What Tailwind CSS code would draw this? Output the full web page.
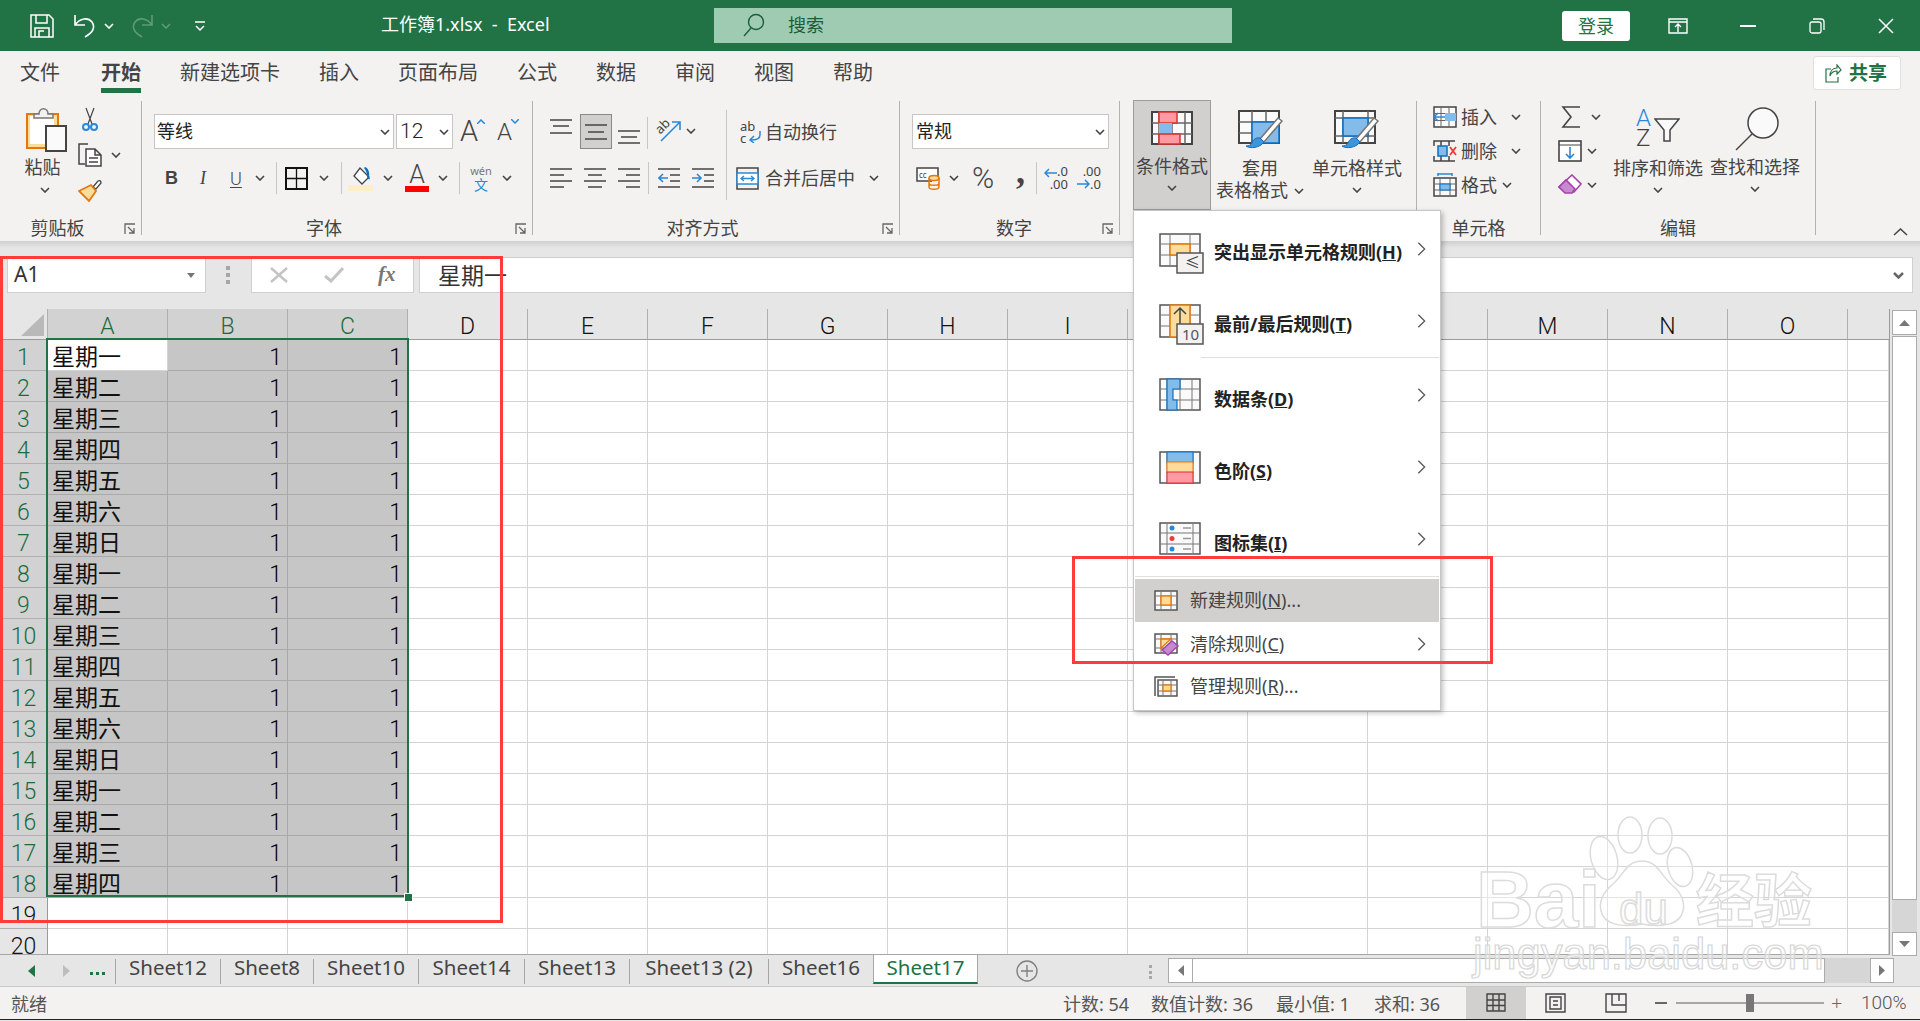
<!DOCTYPE html>
<html lang="zh">
<head>
<meta charset="UTF-8">
<title>工作簿1.xlsx - Excel</title>
<script src="https://cdn.jsdelivr.net/npm/@tailwindcss/browser@4"></script>
</head>
<body class="w-[1920px] h-[1021px] overflow-hidden relative bg-[#e6e6e6] text-[#444] text-[18px] [font-family:'Noto_Sans','Noto_Sans_CJK_SC',sans-serif]">

<svg class="hidden">
  <symbol id="chev" viewBox="0 0 10 6"><path d="M1 1l4 4 4-4" fill="none" stroke="#444" stroke-width="1.6"/></symbol>
  <symbol id="launch" viewBox="0 0 12 12"><path d="M1 11V1h10M4 4l6 6M5 10h5V5" fill="none" stroke="#666" stroke-width="1.3"/></symbol>
  <symbol id="next" viewBox="0 0 10 16"><path d="M1.5 1l7 7-7 7" fill="none" stroke="#555" stroke-width="1.4"/></symbol>
  <symbol id="brush" viewBox="0 0 46 42"><path d="M44 11L26 32l-4-3L40 8z" fill="#fff" stroke="#777" stroke-width="1.5"/><path d="M22 28c-4-1-7 2-8 5-1 2-3 3-6 3 4 3 14 2 18-4z" fill="#3a96dd" stroke="#1b6fb5"/></symbol>
</svg>

<!-- title bar -->
<div class="h-[51px] bg-[#217346] flex items-center text-white">
  <svg class="ml-[30px] w-[24px] h-[24px]" viewBox="0 0 24 24" fill="none" stroke="#fff" stroke-width="1.5"><path d="M1 1h18l4 4v18H1zM6 1v8h11V1M5 23v-9h14v9M9 23v-6h5"/></svg>
  <svg class="ml-[19px] w-[23px] h-[24px]" viewBox="0 0 23 24" fill="none" stroke="#fff" stroke-width="1.6"><path d="M2 1v10h10M2 11C7 4 15 3 19 8c4 6 0 11-7 15"/></svg>
  <svg class="ml-[8px] w-[10px] h-[6px]" viewBox="0 0 10 6"><path d="M1 1l4 4 4-4" fill="none" stroke="#fff" stroke-width="1.6"/></svg>
  <svg class="ml-[17px] w-[23px] h-[24px]" viewBox="0 0 23 24" fill="none" stroke="#5f9b79" stroke-width="1.6"><path d="M21 1v10H11M21 11C16 4 8 3 4 8c-4 6 0 11 7 15"/></svg>
  <svg class="ml-[7px] w-[10px] h-[6px]" viewBox="0 0 10 6"><path d="M1 1l4 4 4-4" fill="none" stroke="#5f9b79" stroke-width="1.6"/></svg>
  <svg class="ml-[24px] w-[10px] h-[12px]" viewBox="0 0 10 12" fill="none" stroke="#fff" stroke-width="1.5"><path d="M0 2h10M1 6l4 4 4-4"/></svg>
  <div class="ml-[176px] w-[170px] whitespace-nowrap text-[18px] leading-[24px] -mt-[3px]">工作簿1.xlsx&nbsp; -&nbsp; Excel</div>
  <div class="ml-[163px] w-[518px] h-[35px] -mt-[1px] bg-[#9fcbb3] flex items-center pl-[29px] text-[#1c5c38]">
    <svg class="w-[22px] h-[24px]" viewBox="0 0 22 24" fill="none" stroke="#1c5c38" stroke-width="1.4"><circle cx="13" cy="9" r="7.5"/><path d="M8 15L1 23"/></svg>
    <span class="ml-[23px]">搜索</span>
  </div>
  <div class="ml-[330px] w-[68px] h-[30px] bg-white rounded-[3px] text-[#217346] text-center leading-[30px]">登录</div>
  <svg class="ml-[38px] w-[20px] h-[16px]" viewBox="0 0 20 16" fill="none" stroke="#fff" stroke-width="1.4"><path d="M1 1h18v14H1zM1 4h18M10 14V7M7 9l3-3 3 3"/></svg>
  <div class="ml-[52px] w-[16px] h-[2px] bg-white"></div>
  <svg class="ml-[53px] w-[16px] h-[16px]" viewBox="0 0 16 16" fill="none" stroke="#fff" stroke-width="1.3"><rect x="1" y="4" width="11" height="11" rx="2"/><path d="M4 1h8a3 3 0 0 1 3 3v8"/></svg>
  <svg class="ml-[53px] w-[16px] h-[16px]" viewBox="0 0 16 16" stroke="#fff" stroke-width="1.5"><path d="M1 1l14 14M15 1L1 15"/></svg>
</div>

<!-- ribbon -->
<div class="h-[190px] bg-[#f3f2f1] relative">
  <div class="h-[50px] flex pl-[20px] gap-[39px] text-[20px] leading-[28px] text-[#444] relative">
    <div class="pt-[8px] mr-[2px]">文件</div>
    <div class="pt-[8px] pb-[1px] h-[42px] font-bold border-b-[5px] border-[#217346]">开始</div>
    <div class="pt-[8px]">新建选项卡</div>
    <div class="pt-[8px]">插入</div>
    <div class="pt-[8px]">页面布局</div>
    <div class="pt-[8px]">公式</div>
    <div class="pt-[8px]">数据</div>
    <div class="pt-[8px]">审阅</div>
    <div class="pt-[8px]">视图</div>
    <div class="pt-[8px]">帮助</div>
    <div class="absolute left-[1813px] top-[5px] w-[88px] h-[34px] bg-white border border-[#e1dfdd] rounded-[3px] flex items-center pl-[11px] text-[#217346] font-bold text-[19px]">
      <svg class="w-[17px] h-[19px]" viewBox="0 0 17 19" fill="none" stroke="#217346" stroke-width="1.2"><path d="M6 5H1v13h12v-5M5 12c0-5 3-8 7-8V1l4 5-4 4V7c-3 0-6 2-7 5z"/></svg>
      <span class="ml-[7px]">共享</span>
    </div>
  </div>

  <div class="flex h-[134px]">
    <!-- 剪贴板 -->
    <div class="w-[142px] border-r border-[#b3b0ad] flex flex-col relative">
      <div class="h-[115px] shrink-0 flex">
        <div class="ml-[20px] w-[50px] flex flex-col items-center">
          <svg class="mt-[6px] ml-[4px] w-[42px] h-[45px]" viewBox="0 0 42 45"><rect x="1" y="7" width="31" height="34" fill="#fbdc9b" stroke="#e3780c" stroke-width="2"/><rect x="4" y="9" width="24" height="28" fill="#fff"/><path d="M8 11V7h5c0-7 9-7 9 0h5v4z" fill="#f3f2f1" stroke="#777" stroke-width="1.5"/><rect x="20" y="19" width="20" height="25" fill="#fafafa" stroke="#444" stroke-width="2"/></svg>
          <div class="mt-[3px] mr-[5px] leading-[24px]">粘贴</div>
          <svg class="mt-[8px] w-[10px] h-[6px]"><use href="#chev"/></svg>
        </div>
        <div class="ml-[8px] flex flex-col">
          <svg class="mt-[6px] ml-[4px] w-[16px] h-[24px]" viewBox="0 0 16 24" fill="none"><path d="M4 1l6 16M12 1L6 17" stroke="#444" stroke-width="1.2"/><circle cx="4" cy="20" r="3" stroke="#2b88d8" stroke-width="2"/><circle cx="12" cy="20" r="3" stroke="#2b88d8" stroke-width="2"/></svg>
          <div class="mt-[12px] flex items-center">
            <svg class="w-[24px] h-[24px]" viewBox="0 0 24 24" fill="none" stroke="#444" stroke-width="1.5"><path d="M10 1H1v20h6"/><path d="M8 6h9l6 6v11H8zM17 6v6h6M11 15h9M11 19h9" fill="#fff"/></svg>
            <svg class="ml-[9px] w-[10px] h-[6px]"><use href="#chev"/></svg>
          </div>
          <svg class="mt-[12px] w-[24px] h-[23px]" viewBox="0 0 24 23"><path d="M15 8l5-6c2-1 3 0 3 2l-5 6z" fill="#fff" stroke="#444" stroke-width="1.3"/><path d="M1 12l12-6 5 6-7 10z" fill="#fbdc9b" stroke="#e3780c" stroke-width="1.8"/></svg>
        </div>
      </div>
      <div class="text-center leading-[24px] pr-[26px]">剪贴板</div>
      <svg class="absolute right-[5px] bottom-[0px] w-[12px] h-[12px]"><use href="#launch"/></svg>
    </div>

    <!-- 字体 -->
    <div class="w-[391px] border-r border-[#b3b0ad] flex flex-col relative pl-[12px]">
      <div class="h-[115px] shrink-0">
        <div class="mt-[13px] flex items-start">
          <div class="w-[240px] h-[35px] bg-white border border-[#c8c6c4] flex items-center pl-[2px] text-[#222]">
            <span>等线</span><svg class="ml-auto mr-[3px] w-[10px] h-[6px]"><use href="#chev"/></svg>
          </div>
          <div class="ml-[2px] w-[57px] h-[35px] bg-white border border-[#c8c6c4] flex items-center pl-[3px] text-[#222] text-[21px] font-light [font-family:'Roboto',sans-serif]">
            <span>12</span><svg class="ml-auto mr-[3px] w-[10px] h-[6px]"><use href="#chev"/></svg>
          </div>
          <div class="ml-[7px] relative w-[24px] h-[35px] text-[29px] leading-[34px] font-light [font-family:'Roboto',sans-serif]">A<svg class="absolute left-[17px] top-[5px] w-[8px] h-[5px]" viewBox="0 0 8 5"><path d="M0 5l4-4 4 4" fill="none" stroke="#2b88d8" stroke-width="1.5"/></svg></div>
          <div class="ml-[13px] relative w-[21px] h-[35px] text-[24px] leading-[36px] font-light [font-family:'Roboto',sans-serif]">A<svg class="absolute left-[14px] top-[5px] w-[8px] h-[5px]" viewBox="0 0 8 5"><path d="M0 0l4 4 4-4" fill="none" stroke="#2b88d8" stroke-width="1.5"/></svg></div>
        </div>
        <div class="mt-[16px] h-[26px] flex items-center relative">
          <span class="ml-[11px] w-[12px] font-bold text-[18px] [font-family:'Liberation_Sans',sans-serif]">B</span>
          <span class="ml-[23px] w-[10px] italic text-[18px] [font-family:'Liberation_Serif',serif]">I</span>
          <span class="ml-[20px] w-[14px] underline underline-offset-2 text-[18px] font-light [font-family:'Roboto',sans-serif]">U</span>
          <svg class="ml-[11px] w-[10px] h-[6px]"><use href="#chev"/></svg>
          <div class="ml-[11px] w-px h-[32px] bg-[#c8c6c4]"></div>
          <svg class="ml-[8px] w-[23px] h-[23px]" viewBox="0 0 23 23" fill="none" stroke="#111" stroke-width="2"><rect x="1" y="1" width="21" height="21"/><path d="M11.5 1v21M1 11.5h21" stroke-width="1.3"/></svg>
          <svg class="ml-[11px] w-[10px] h-[6px]"><use href="#chev"/></svg>
          <div class="ml-[12px] w-px h-[32px] bg-[#c8c6c4]"></div>
          <svg class="ml-[6px] w-[25px] h-[25px]" viewBox="0 0 25 25"><path d="M12 2l9 9-7 7-8-8z" fill="#fff" stroke="#444" stroke-width="1.3"/><path d="M17 1c3 1 5 5 4 10l1 2c-2 1-3-1-3-3 0-3-1-6-3-8z" fill="#0b6fc0"/><rect x="0" y="19" width="25" height="6" fill="#fdeec7"/></svg>
          <svg class="ml-[10px] w-[10px] h-[6px]"><use href="#chev"/></svg>
          <div class="ml-[12px] w-[24px] flex flex-col items-center">
            <span class="text-[25px] leading-[21px] font-light [font-family:'Roboto',sans-serif]">A</span>
            <div class="w-[24px] h-[6px] bg-[#f00] mt-[1px]"></div>
          </div>
          <svg class="ml-[9px] w-[10px] h-[6px]"><use href="#chev"/></svg>
          <div class="ml-[11px] w-px h-[32px] bg-[#c8c6c4]"></div>
          <div class="ml-[10px] w-[22px] flex flex-col items-center">
            <span class="text-[11px] leading-[12px] text-[#777]">wén</span>
            <span class="text-[14px] leading-[15px] text-[#2b88d8]">文</span>
          </div>
          <svg class="ml-[10px] w-[10px] h-[6px]"><use href="#chev"/></svg>
        </div>
      </div>
      <div class="text-center leading-[24px] -ml-[12px] pr-[26px]">字体</div>
      <svg class="absolute right-[5px] bottom-[0px] w-[12px] h-[12px]"><use href="#launch"/></svg>
    </div>

    <!-- 对齐方式 -->
    <div class="w-[367px] border-r border-[#b3b0ad] flex flex-col relative">
      <div class="h-[115px] shrink-0 flex pl-[17px]">
        <div class="w-[176px]">
          <div class="mt-[13px] h-[35px] flex">
            <svg class="w-[22px] h-[35px]" viewBox="0 0 22 35" stroke="#444" stroke-width="1.5"><path d="M0 6h22M3 12h16M0 19h22"/></svg>
            <div class="ml-[8px] w-[32px] h-[35px] bg-[#d2d0ce] border border-[#8a8886] flex items-center justify-center">
              <svg class="w-[22px] h-[16px]" viewBox="0 0 22 16" stroke="#444" stroke-width="1.5"><path d="M0 1h22M3 8h16M0 15h22"/></svg>
            </div>
            <svg class="ml-[6px] w-[22px] h-[35px]" viewBox="0 0 22 35" stroke="#444" stroke-width="1.5"><path d="M0 17h22M3 23h16M0 29h22"/></svg>
            <div class="ml-[7px] mt-[3px] w-px h-[32px] bg-[#c8c6c4]"></div>
            <svg class="ml-[9px] mt-[5px] w-[25px] h-[23px] overflow-visible" viewBox="0 0 25 23" fill="none"><path d="M4 22L23 3M15 3h8v8" stroke="#2b88d8" stroke-width="1.6"/><text x="0" y="12" font-size="13" fill="#444" transform="rotate(-45 6 10)">ab</text></svg>
            <svg class="ml-[4px] mt-[14px] w-[10px] h-[6px]"><use href="#chev"/></svg>
          </div>
          <div class="mt-[16px] h-[26px] flex items-center">
            <svg class="w-[22px] h-[22px]" viewBox="0 0 22 22" stroke="#444" stroke-width="1.5"><path d="M0 2h22M0 8h14M0 14h22M0 20h14"/></svg>
            <svg class="ml-[12px] w-[22px] h-[22px]" viewBox="0 0 22 22" stroke="#444" stroke-width="1.5"><path d="M0 2h22M4 8h14M0 14h22M4 20h14"/></svg>
            <svg class="ml-[12px] w-[22px] h-[22px]" viewBox="0 0 22 22" stroke="#444" stroke-width="1.5"><path d="M0 2h22M8 8h14M0 14h22M8 20h14"/></svg>
            <div class="ml-[8px] w-px h-[32px] bg-[#c8c6c4]"></div>
            <svg class="ml-[9px] w-[22px] h-[22px]" viewBox="0 0 22 22" fill="none"><path d="M0 2h22M12 8h10M12 14h10M0 20h22" stroke="#444" stroke-width="1.5"/><path d="M10 11H1M5 7l-4 4 4 4" stroke="#2b88d8" stroke-width="1.6"/></svg>
            <svg class="ml-[12px] w-[22px] h-[22px]" viewBox="0 0 22 22" fill="none"><path d="M0 2h22M12 8h10M12 14h10M0 20h22" stroke="#444" stroke-width="1.5"/><path d="M0 11h9M5 7l4 4-4 4" stroke="#2b88d8" stroke-width="1.6"/></svg>
          </div>
        </div>
        <div class="mt-[9px] w-px h-[90px] bg-[#c8c6c4]"></div>
        <div class="pl-[9px]">
          <div class="mt-[17px] h-[28px] flex items-center">
            <div class="ml-[4px] w-[21px] h-[24px] relative text-[13px] leading-[12px] text-[#444]"><span>ab</span><br><span>c</span><svg class="absolute left-[8px] top-[10px] w-[13px] h-[13px]" viewBox="0 0 13 13" fill="none" stroke="#2b88d8" stroke-width="1.5"><path d="M12 1v4c0 4-3 5-9 5M6 6l-4 4 4 3"/></svg></div>
            <span class="ml-[4px] leading-[24px]">自动换行</span>
          </div>
          <div class="mt-[19px] h-[26px] flex items-center">
            <svg class="w-[23px] h-[23px]" viewBox="0 0 23 23" fill="none"><rect x="1" y="1" width="21" height="21" stroke="#444" stroke-width="1.5"/><rect x="1" y="6" width="21" height="11" fill="#fff" stroke="#2b88d8" stroke-width="1.5"/><path d="M5 11.5h13M8 9l-3 2.500 3 2.500M15 9l3 2.500-3 2.500" stroke="#2b88d8" stroke-width="1.3"/></svg>
            <span class="ml-[6px] leading-[24px]">合并后居中</span>
            <svg class="ml-[14px] w-[10px] h-[6px]"><use href="#chev"/></svg>
          </div>
        </div>
      </div>
      <div class="text-center leading-[24px] -ml-[27px]">对齐方式</div>
      <svg class="absolute right-[5px] bottom-[0px] w-[12px] h-[12px]"><use href="#launch"/></svg>
    </div>

    <!-- 数字 -->
    <div class="w-[220px] border-r border-[#b3b0ad] flex flex-col relative pl-[12px]">
      <div class="h-[115px] shrink-0">
        <div class="mt-[13px] w-[197px] h-[35px] bg-white border border-[#c8c6c4] flex items-center pl-[3px] text-[#222]">
          <span>常规</span><svg class="ml-auto mr-[3px] w-[10px] h-[6px]"><use href="#chev"/></svg>
        </div>
        <div class="mt-[16px] h-[26px] flex items-center">
          <svg class="ml-[4px] w-[24px] h-[24px]" viewBox="0 0 24 24"><path d="M16 15H1V2h21v8" fill="#fff" stroke="#444" stroke-width="1.5"/><text x="3" y="12" font-size="8" fill="#444">cc</text><ellipse cx="18" cy="12" rx="5" ry="2.500" fill="#fbdc9b" stroke="#e3780c" stroke-width="1.5"/><path d="M13 12v9c0 3 10 3 10 0v-9M13 17c0 3 10 3 10 0" fill="none" stroke="#e3780c" stroke-width="1.5"/></svg>
          <svg class="ml-[9px] w-[10px] h-[6px]"><use href="#chev"/></svg>
          <span class="ml-[13px] w-[26px] text-[30px] leading-[30px] font-light [font-family:'Roboto',sans-serif]">%</span>
          <span class="ml-[18px] w-[12px] text-[36px] leading-[22px] -mt-[14px] font-bold [font-family:'Liberation_Serif',serif]">,</span>
          <div class="ml-[8px] w-px h-[32px] bg-[#c8c6c4]"></div>
          <div class="ml-[7px] w-[24px] relative text-[13px] leading-[13px] text-right"><span>.0</span><br><span>.00</span><svg class="absolute left-0 top-[3px] w-[13px] h-[10px]" viewBox="0 0 13 10" fill="none" stroke="#2b88d8" stroke-width="1.5"><path d="M13 5H1M5 1L1 5l4 4"/></svg></div>
          <div class="ml-[9px] w-[24px] relative text-[13px] leading-[13px] text-right"><span>.00</span><br><span>.0</span><svg class="absolute left-0 top-[14px] w-[13px] h-[10px]" viewBox="0 0 13 10" fill="none" stroke="#2b88d8" stroke-width="1.5"><path d="M0 5h12M8 1l4 4-4 4"/></svg></div>
        </div>
      </div>
      <div class="text-center leading-[24px] -ml-[3px]">数字</div>
      <svg class="absolute right-[5px] bottom-[0px] w-[12px] h-[12px]"><use href="#launch"/></svg>
    </div>

    <!-- 样式 -->
    <div class="w-[297px] border-r border-[#b3b0ad] flex pl-[13px] items-start">
      <div class="-mt-[1px] w-[78px] h-[110px] bg-[#d2d0ce] border border-[#9e9c9a] flex flex-col items-center">
        <svg class="mt-[10px] w-[42px] h-[34px]" viewBox="0 0 42 34"><rect x="1" y="1" width="40" height="32" fill="#fafafa" stroke="#444" stroke-width="2"/><path d="M8 1v32M21 1v32M34 1v32M1 12h40M1 23h40" stroke="#666" stroke-width="1.500"/><rect x="8" y="1" width="18" height="11" fill="#ff9aa2" stroke="#d9302c" stroke-width="1.500"/><rect x="8" y="12" width="13" height="11" fill="#83bbea"/><rect x="8" y="23" width="21" height="10" fill="#ff9aa2" stroke="#d9302c" stroke-width="1.500"/></svg>
        <div class="mt-[9px] leading-[24px]">条件格式</div>
        <svg class="mt-[7px] w-[10px] h-[6px]"><use href="#chev"/></svg>
      </div>
      <div class="ml-[3px] w-[94px] flex flex-col items-center">
        <svg class="mt-[9px] w-[46px] h-[42px]" viewBox="0 0 46 42"><rect x="1" y="1" width="40" height="32" fill="#fafafa" stroke="#444" stroke-width="2"/><path d="M14 1v32M28 1v32M1 12h40M1 23h40" stroke="#666" stroke-width="1.500"/><rect x="14" y="12" width="27" height="21" fill="#83bbea" stroke="#0b6fc0" stroke-width="1.500"/><use href="#brush" width="46" height="42"/></svg>
        <div class="mt-[4px] mr-[2px] leading-[24px]">套用</div>
        <div class="-mt-[1px] -ml-[2px] flex items-center leading-[23px] whitespace-nowrap">表格格式<svg class="ml-[6px] w-[10px] h-[6px]"><use href="#chev"/></svg></div>
      </div>
      <div class="ml-[3px] w-[92px] flex flex-col items-center">
        <svg class="mt-[9px] w-[46px] h-[42px]" viewBox="0 0 46 42"><rect x="1" y="1" width="40" height="32" fill="#fafafa" stroke="#444" stroke-width="2"/><path d="M9 1v32M34 1v32M1 8h40M1 26h40" stroke="#666" stroke-width="1.500"/><rect x="9" y="8" width="25" height="18" fill="#83bbea" stroke="#0b6fc0" stroke-width="1.500"/><use href="#brush" width="46" height="42"/></svg>
        <div class="mt-[4px] leading-[24px] whitespace-nowrap">单元格样式</div>
        <svg class="mt-[7px] w-[10px] h-[6px]"><use href="#chev"/></svg>
      </div>
    </div>

    <!-- 单元格 -->
    <div class="w-[124px] border-r border-[#b3b0ad] flex flex-col">
      <div class="h-[115px] shrink-0 pl-[16px]">
        <div class="-mt-[1px] h-[34px] flex items-center">
          <svg class="w-[24px] h-[22px]" viewBox="0 0 24 22"><rect x="1" y="1" width="22" height="20" fill="#fafafa" stroke="#444" stroke-width="1.500"/><path d="M8 1v20M16 1v20M1 7.500h22M1 14.500h22" stroke="#666"/><rect x="12" y="7" width="11" height="8" fill="#83bbea"/><path d="M12 11H1M5 7l-4 4 4 4" fill="none" stroke="#2b88d8" stroke-width="1.600"/></svg>
          <span class="ml-[4px] leading-[24px]">插入</span>
          <svg class="ml-[14px] w-[10px] h-[6px]"><use href="#chev"/></svg>
        </div>
        <div class="h-[34px] flex items-center">
          <svg class="w-[24px] h-[22px]" viewBox="0 0 24 22"><path d="M1 6V1h21M1 16v5h21M8 1v5M16 1v5M8 16v5M16 16v5" fill="none" stroke="#444" stroke-width="1.500"/><rect x="5" y="6" width="9" height="10" fill="#83bbea" stroke="#0b6fc0" stroke-width="1.500"/><path d="M17 7l6 8M23 7l-6 8" stroke="#f03a3a" stroke-width="1.800"/></svg>
          <span class="ml-[4px] leading-[24px]">删除</span>
          <svg class="ml-[14px] w-[10px] h-[6px]"><use href="#chev"/></svg>
        </div>
        <div class="h-[34px] flex items-center">
          <svg class="w-[24px] h-[24px]" viewBox="0 0 24 24"><path d="M5 1h14M5 0v3M19 0v3" fill="none" stroke="#2b88d8" stroke-width="1.500"/><rect x="1" y="5" width="22" height="18" fill="#fafafa" stroke="#444" stroke-width="1.500"/><path d="M7 5v18M17 5v18M1 11h22M1 17h22" stroke="#666"/><rect x="7" y="11" width="10" height="6" fill="#83bbea" stroke="#0b6fc0"/></svg>
          <span class="ml-[4px] leading-[24px]">格式</span>
          <svg class="ml-[5px] w-[10px] h-[6px]"><use href="#chev"/></svg>
        </div>
      </div>
      <div class="text-center leading-[24px]">单元格</div>
    </div>

    <!-- 编辑 -->
    <div class="w-[275px] border-r border-[#b3b0ad] flex flex-col">
      <div class="h-[115px] shrink-0 flex pl-[16px]">
        <div class="w-[56px] -mt-[1px]">
          <div class="h-[34px] flex items-center">
            <svg class="ml-[4px] w-[19px] h-[22px]" viewBox="0 0 19 22" fill="none" stroke="#444" stroke-width="1.600"><path d="M19 1H2l8 10-8 10h17"/></svg>
            <svg class="ml-[11px] w-[10px] h-[6px]"><use href="#chev"/></svg>
          </div>
          <div class="h-[34px] flex items-center">
            <svg class="ml-[1px] w-[24px] h-[22px]" viewBox="0 0 24 22" fill="none"><rect x="1" y="1" width="22" height="20" fill="#fff" stroke="#444" stroke-width="1.600"/><path d="M1 5h22" stroke="#444"/><path d="M12 7v11M8 14l4 4 4-4" stroke="#2b88d8" stroke-width="1.600"/></svg>
            <svg class="ml-[5px] w-[10px] h-[6px]"><use href="#chev"/></svg>
          </div>
          <div class="h-[34px] flex items-center">
            <svg class="ml-[1px] w-[24px] h-[23px]" viewBox="0 0 24 23"><path d="M14 1l9 9-7 8H8L1 13z" fill="#fff" stroke="#a544a8" stroke-width="1.600"/><path d="M1 13l7-7 9 9-3 4H7z" fill="#c78ad0" stroke="#a544a8" stroke-width="1.600"/></svg>
            <svg class="ml-[5px] w-[10px] h-[6px]"><use href="#chev"/></svg>
          </div>
        </div>
        <div class="w-[90px] flex flex-col items-center">
          <div class="mt-[7px] w-[44px] h-[41px] relative text-[24px] leading-[20px] font-light [font-family:'Roboto',sans-serif]">
            <span class="block text-[#2b88d8]">A</span><span class="block">Z</span>
            <svg class="absolute left-[18px] top-[10px] w-[26px] h-[24px]" viewBox="0 0 26 24" fill="none"><path d="M1 1h24L16 12v11h-6V12z" fill="#fafafa" stroke="#444" stroke-width="1.500"/></svg>
          </div>
          <div class="mt-[7px] leading-[24px] whitespace-nowrap">排序和筛选</div>
          <svg class="mt-[7px] w-[10px] h-[6px]"><use href="#chev"/></svg>
        </div>
        <div class="ml-[7px] w-[90px] flex flex-col items-center">
          <svg class="mt-[6px] ml-[4px] w-[44px] h-[44px]" viewBox="0 0 44 44" fill="none" stroke="#444" stroke-width="1.500"><circle cx="28" cy="16" r="15" fill="#fafafa"/><path d="M17 27L1 43"/></svg>
          <div class="mt-[4px] leading-[24px] whitespace-nowrap">查找和选择</div>
          <svg class="mt-[7px] w-[10px] h-[6px]"><use href="#chev"/></svg>
        </div>
      </div>
      <div class="text-center leading-[24px]">编辑</div>
    </div>
  </div>
  <svg class="absolute left-[1893px] top-[177px] w-[15px] h-[8px]" viewBox="0 0 15 8" fill="none" stroke="#444" stroke-width="1.500"><path d="M1 7l6.500-6 6.500 6"/></svg>
</div>

<!-- formula bar -->
<div class="h-[68px] bg-[#e6e6e6]">
  <div class="h-[7px] bg-gradient-to-b from-[#cfcfcf] to-[#e6e6e6]"></div>
  <div class="mt-[9px] h-[36px] flex">
    <div class="ml-[7px] w-[199px] bg-white border border-[#d0d0d0] flex items-center pl-[6px] text-[#333] text-[21px]">
      A1<svg class="ml-auto mr-[10px] w-[8px] h-[5px]" viewBox="0 0 8 5"><path d="M0 0h8L4 5z" fill="#777"/></svg>
    </div>
    <div class="ml-[19px] mt-[9px] h-[18px] w-[5px] flex flex-col justify-between items-center">
      <div class="w-[4px] h-[4px] bg-[#a6a6a6]"></div><div class="w-[4px] h-[4px] bg-[#a6a6a6]"></div><div class="w-[4px] h-[4px] bg-[#a6a6a6]"></div>
    </div>
    <div class="ml-[21px] w-[163px] bg-white border border-[#d0d0d0] flex items-center">
      <svg class="ml-[18px] w-[18px] h-[16px]" viewBox="0 0 18 16" stroke="#c4c4c4" stroke-width="2.500"><path d="M1 1l16 14M17 1L1 15"/></svg>
      <svg class="ml-[36px] w-[20px] h-[16px]" viewBox="0 0 20 16" fill="none" stroke="#c4c4c4" stroke-width="3"><path d="M1 9l6 5L19 1"/></svg>
      <span class="ml-[34px] italic font-bold text-[21px] text-[#777] [font-family:'Liberation_Serif',serif]">fx</span>
    </div>
    <div class="ml-[5px] w-[1494px] bg-white border border-[#d0d0d0] flex items-center pl-[18px] text-[23px] text-[#333]">
      星期一<svg class="ml-auto mr-[8px] w-[11px] h-[7px]" viewBox="0 0 11 7" fill="none" stroke="#666" stroke-width="2.500"><path d="M1 1l4.500 4.500L10 1"/></svg>
    </div>
  </div>
</div>

<!-- sheet -->
<div class="h-[645px] flex relative">
  <div class="w-[1890px] h-[645px] overflow-hidden border-r border-[#9b9b9b] relative bg-white">
    <div class="h-[30px] flex bg-[#e6e6e6] text-[23px] leading-[36px] font-light text-center text-[#111] border-b border-[#9b9b9b] box-content [font-family:'Roboto',sans-serif]">
      <div class="w-[48px] relative border-r border-[#b0b0b0]">
        <svg class="absolute left-[21px] top-[5px] w-[23px] h-[22px]" viewBox="0 0 23 22"><path d="M23 0v22H0z" fill="#b9b9b9"/></svg>
      </div>
      <div class="w-[120px] bg-[#d2d2d2] text-[#1a6b3e] border-r border-[#b0b0b0]">A</div>
      <div class="w-[120px] bg-[#d2d2d2] text-[#1a6b3e] border-r border-[#b0b0b0]">B</div>
      <div class="w-[120px] bg-[#d2d2d2] text-[#1a6b3e] border-r border-[#b0b0b0]">C</div>
      <div class="w-[120px] border-r border-[#b0b0b0]">D</div>
      <div class="w-[120px] border-r border-[#b0b0b0]">E</div>
      <div class="w-[120px] border-r border-[#b0b0b0]">F</div>
      <div class="w-[120px] border-r border-[#b0b0b0]">G</div>
      <div class="w-[120px] border-r border-[#b0b0b0]">H</div>
      <div class="w-[120px] border-r border-[#b0b0b0]">I</div>
      <div class="w-[120px] border-r border-[#b0b0b0]"></div>
      <div class="w-[120px] border-r border-[#b0b0b0]"></div>
      <div class="w-[120px] border-r border-[#b0b0b0]"></div>
      <div class="w-[120px] border-r border-[#b0b0b0]">M</div>
      <div class="w-[120px] border-r border-[#b0b0b0]">N</div>
      <div class="w-[120px] border-r border-[#b0b0b0]">O</div>
    </div>
    <div id="rows"></div>
    <!-- selection border -->
    <div class="absolute left-[46px] top-[29px] w-[363px] h-[559px] border-2 border-[#217346] pointer-events-none"></div>
    <div class="absolute left-[404px] top-[584px] w-[7px] h-[7px] bg-[#217346] border border-white box-content pointer-events-none"></div>
  </div>
  <!-- vertical scroll -->
  <div class="w-[30px] pl-[2px] flex flex-col bg-[#e6e6e6] h-[647px] relative z-10">
    <div class="mt-[1px] w-[25px] h-[25px] bg-white border border-[#ababab] flex items-center justify-center">
      <svg class="w-[11px] h-[6px]" viewBox="0 0 11 6"><path d="M5.500 0L11 6H0z" fill="#777"/></svg>
    </div>
    <div class="mt-[1px] w-[25px] h-[564px] bg-white border border-[#ababab]"></div>
    <div class="w-[25px] h-[32px] bg-[#d6d6d6]"></div>
    <div class="w-[25px] h-[24px] bg-white border border-[#ababab] flex items-center justify-center">
      <svg class="w-[11px] h-[6px]" viewBox="0 0 11 6"><path d="M0 0h11L5.500 6z" fill="#777"/></svg>
    </div>
  </div>
</div>

<!-- sheet tabs -->
<div class="h-[33px] bg-[#e6e6e6] border-t border-[#a6a6a6] border-b border-b-[#c8c8c8] flex text-[20.500px] text-[#444] relative">
  <div class="w-[115px] flex items-center">
    <svg class="ml-[28px] w-[7px] h-[12px]" viewBox="0 0 7 12"><path d="M7 0v12L0 6z" fill="#217346"/></svg>
    <svg class="ml-[28px] w-[7px] h-[12px]" viewBox="0 0 7 12"><path d="M0 0v12l7-6z" fill="#bdbdbd"/></svg>
    <span class="ml-[20px] flex gap-[3px] mt-[6px]"><i class="w-[3px] h-[3px] bg-[#217346]"></i><i class="w-[3px] h-[3px] bg-[#217346]"></i><i class="w-[3px] h-[3px] bg-[#217346]"></i></span>
  </div>
  <div class="w-px h-[25px] mt-[4px] bg-[#a6a6a6]"></div>
  <div class="w-[104px] text-center leading-[24px]">Sheet12</div>
  <div class="w-px h-[25px] mt-[4px] bg-[#a6a6a6]"></div>
  <div class="w-[92px] text-center leading-[24px]">Sheet8</div>
  <div class="w-px h-[25px] mt-[4px] bg-[#a6a6a6]"></div>
  <div class="w-[104px] text-center leading-[24px]">Sheet10</div>
  <div class="w-px h-[25px] mt-[4px] bg-[#a6a6a6]"></div>
  <div class="w-[105px] text-center leading-[24px]">Sheet14</div>
  <div class="w-px h-[25px] mt-[4px] bg-[#a6a6a6]"></div>
  <div class="w-[104px] text-center leading-[24px]">Sheet13</div>
  <div class="w-px h-[25px] mt-[4px] bg-[#a6a6a6]"></div>
  <div class="w-[138px] text-center leading-[24px]">Sheet13 (2)</div>
  <div class="w-px h-[25px] mt-[4px] bg-[#a6a6a6]"></div>
  <div class="w-[104px] text-center leading-[24px]">Sheet16</div>
  <div class="w-[105px] h-[30px] -mt-px bg-white border-x border-t border-[#a6a6a6] border-b-2 border-b-[#217346] text-[#217346] text-center leading-[24px]">Sheet17</div>
  <svg class="ml-[38px] mt-[5px] w-[22px] h-[22px]" viewBox="0 0 22 22" fill="none" stroke="#808080" stroke-width="1.400"><circle cx="11" cy="11" r="10"/><path d="M11 5v12M5 11h12"/></svg>
  <div class="ml-[111px] mt-[10px] h-[14px] w-[4px] flex flex-col justify-between">
    <i class="w-[3px] h-[3px] bg-[#a6a6a6]"></i><i class="w-[3px] h-[3px] bg-[#a6a6a6]"></i><i class="w-[3px] h-[3px] bg-[#a6a6a6]"></i>
  </div>
  <div class="ml-[15px] mt-[3px] w-[25px] h-[25px] bg-white border border-[#ababab] flex items-center justify-center">
    <svg class="w-[6px] h-[11px]" viewBox="0 0 6 11"><path d="M6 0v11L0 5.500z" fill="#777"/></svg>
  </div>
  <div class="mt-[3px] w-[632px] h-[25px] bg-white border-y border-r border-[#ababab]"></div>
  <div class="mt-[3px] w-[45px] h-[25px] bg-[#d6d6d6]"></div>
  <div class="mt-[3px] w-[24px] h-[25px] bg-white border border-[#ababab] flex items-center justify-center">
    <svg class="w-[6px] h-[11px]" viewBox="0 0 6 11"><path d="M0 0v11l6-5.500z" fill="#777"/></svg>
  </div>
</div>

<!-- status bar -->
<div class="h-[33px] bg-[#f3f2f1] flex items-center text-[18px] text-[#555] border-b border-[#222] box-content -mt-px">
  <span class="ml-[11px] w-[1052px] pt-[3px]">就绪</span>
  <span class="w-[88px] whitespace-nowrap pt-[3px]">计数: 54</span>
  <span class="w-[125px] whitespace-nowrap pt-[3px]">数值计数: 36</span>
  <span class="w-[98px] whitespace-nowrap pt-[3px]">最小值: 1</span>
  <span class="w-[92px] whitespace-nowrap pt-[3px]">求和: 36</span>
  <div class="w-[60px] h-full bg-[#d2d0ce] flex items-center justify-center">
    <svg class="w-[20px] h-[19px]" viewBox="0 0 20 19" fill="none" stroke="#444" stroke-width="1.400"><path d="M1 1h18v17H1zM7 1v17M13 1v17M1 7h18M1 12.500h18"/></svg>
  </div>
  <svg class="ml-[19px] w-[21px] h-[20px]" viewBox="0 0 21 20" fill="none" stroke="#444" stroke-width="1.400"><path d="M1 1h19v18H1zM5 4h11v12H5zM8 8h5M8 12h5"/></svg>
  <svg class="ml-[39px] w-[22px] h-[20px]" viewBox="0 0 22 20" fill="none" stroke="#444" stroke-width="1.400"><path d="M1 1h20v18H1zM7 1v11h14M14 1v7"/></svg>
  <div class="ml-[28px] w-[12px] h-[2px] bg-[#666]"></div>
  <div class="ml-[9px] w-[148px] h-[2px] bg-[#a6a6a6] relative">
    <div class="absolute left-[70px] -top-[8px] w-[8px] h-[18px] bg-[#777]"></div>
  </div>
  <span class="ml-[7px] w-[12px] text-[20px] leading-[20px] font-light text-[#666]">+</span>
  <span class="ml-[18px] whitespace-nowrap text-[19px] pt-[2px] font-light [font-family:'Roboto',sans-serif]">100%</span>
</div>

<!-- conditional format menu -->
<div class="absolute left-[1133px] top-[210px] w-[308px] h-[501px] bg-white border border-[#c8c6c4] shadow-[2px_2px_5px_rgba(0,0,0,0.25)] text-[#222]">
  <div class="h-[146px] relative">
    <svg class="absolute left-[25px] top-[22px] w-[46px] h-[41px]" viewBox="0 0 46 41"><rect x="1" y="1" width="40" height="32" fill="#fafafa" stroke="#555" stroke-width="1.500"/><path d="M11 1v32M31 1v32M1 11h40M1 22h40" stroke="#777"/><path d="M11 22V11h20v11z" fill="#fbdc9b" stroke="#e3780c" stroke-width="1.500"/><rect x="18" y="20" width="26" height="20" fill="#f3f2f1" stroke="#555" stroke-width="1.500"/><text x="26" y="35" font-size="15" fill="#444">≤</text></svg>
    <svg class="absolute left-[25px] top-[93px] w-[46px] h-[41px]" viewBox="0 0 46 41"><rect x="1" y="1" width="40" height="32" fill="#fafafa" stroke="#555" stroke-width="1.500"/><path d="M11 1v32M31 1v32M1 11h40M1 22h40" stroke="#777"/><rect x="11" y="1" width="20" height="32" fill="#fbdc9b" stroke="#e3780c" stroke-width="1.500"/><path d="M21 21V4M15 10l6-6 6 6" fill="none" stroke="#444" stroke-width="1.500"/><rect x="18" y="20" width="26" height="20" fill="#f3f2f1" stroke="#555" stroke-width="1.500"/><text x="23" y="36" font-size="15" fill="#555">10</text></svg>
    <div class="absolute left-[80px] top-[28px] leading-[26px] font-bold whitespace-nowrap">突出显示单元格规则(<u>H</u>)</div>
    <div class="absolute left-[80px] top-[100px] leading-[26px] font-bold whitespace-nowrap">最前/最后规则(<u>T</u>)</div>
    <svg class="absolute left-[283px] top-[30px] w-[9px] h-[16px]"><use href="#next"/></svg>
    <svg class="absolute left-[283px] top-[102px] w-[9px] h-[16px]"><use href="#next"/></svg>
  </div>
  <div class="ml-[67px] mr-px h-px bg-[#e1dfdd]"></div>
  <div class="h-[218px] relative">
    <svg class="absolute left-[25px] top-[20px] w-[42px] h-[33px]" viewBox="0 0 42 33"><rect x="1" y="1" width="40" height="31" fill="#fafafa" stroke="#555" stroke-width="1.500"/><path d="M8 1v31M21 1v31M33 1v31M1 11h40M1 22h40" stroke="#777"/><path d="M8 1h13v10h-7v11h4v10H8z" fill="#83bbea" stroke="#0b6fc0" stroke-width="1.200"/></svg>
    <svg class="absolute left-[25px] top-[93px] w-[42px] h-[33px]" viewBox="0 0 42 33"><rect x="1" y="1" width="40" height="31" fill="#fafafa" stroke="#555" stroke-width="1.500"/><path d="M8 1v31M34 1v31" stroke="#777"/><rect x="8" y="1" width="26" height="11" fill="#83bbea" stroke="#0b6fc0"/><rect x="8" y="11" width="26" height="11" fill="#fbdc9b" stroke="#e3780c"/><rect x="8" y="21" width="26" height="11" fill="#ff9aa2" stroke="#d9302c"/></svg>
    <svg class="absolute left-[25px] top-[164px] w-[42px] h-[33px]" viewBox="0 0 42 33"><rect x="1" y="1" width="40" height="31" fill="#fafafa" stroke="#555" stroke-width="1.500"/><path d="M8 1v31M34 1v31M1 11h40M1 22h40" stroke="#777"/><circle cx="13" cy="6" r="2.500" fill="#2b88d8"/><circle cx="13" cy="16.500" r="2.500" fill="#f03a3a"/><circle cx="13" cy="27" r="2.500" fill="#2b88d8"/><path d="M24 6h8M24 16.500h8M24 27h8" stroke="#999" stroke-width="1.500"/></svg>
    <div class="absolute left-[80px] top-[28px] leading-[26px] font-bold whitespace-nowrap">数据条(<u>D</u>)</div>
    <div class="absolute left-[80px] top-[100px] leading-[26px] font-bold whitespace-nowrap">色阶(<u>S</u>)</div>
    <div class="absolute left-[80px] top-[172px] leading-[26px] font-bold whitespace-nowrap">图标集(<u>I</u>)</div>
    <svg class="absolute left-[283px] top-[29px] w-[9px] h-[16px]"><use href="#next"/></svg>
    <svg class="absolute left-[283px] top-[101px] w-[9px] h-[16px]"><use href="#next"/></svg>
    <svg class="absolute left-[283px] top-[173px] w-[9px] h-[16px]"><use href="#next"/></svg>
  </div>
  <div class="ml-px mr-px h-px bg-[#e1dfdd]"></div>
  <div class="mt-[2px] mx-px h-[43px] bg-[#d2d0ce] flex items-center pl-[19px]">
    <svg class="w-[24px] h-[21px]" viewBox="0 0 24 21"><rect x="1" y="1" width="22" height="19" fill="#fafafa" stroke="#555" stroke-width="1.500"/><path d="M7 1v19M17 1v19M1 6h22M1 15h22" stroke="#777"/><rect x="7" y="6" width="10" height="9" fill="#fbdc9b" stroke="#e3780c" stroke-width="1.300"/></svg>
    <span class="ml-[12px] text-[#444] whitespace-nowrap">新建规则(<u>N</u>)...</span>
  </div>
  <div class="mx-px h-[43px] flex items-center pl-[19px] pt-[1px] relative">
    <svg class="w-[25px] h-[23px]" viewBox="0 0 25 23"><rect x="1" y="1" width="22" height="19" fill="#fafafa" stroke="#555" stroke-width="1.500"/><path d="M7 1v19M17 1v19M1 6h22M1 15h22" stroke="#777"/><path d="M7 6h10L7 15z" fill="#fbdc9b" stroke="#e3780c" stroke-width="1.300"/><path d="M18 8l6 5-10 9-6-5z" fill="#c78ad0" stroke="#a544a8" stroke-width="1.500"/></svg>
    <span class="ml-[11px] text-[#444] whitespace-nowrap">清除规则(<u>C</u>)</span>
    <svg class="absolute left-[282px] top-[14px] w-[9px] h-[16px]"><use href="#next"/></svg>
  </div>
  <div class="mx-px h-[42px] flex items-center pl-[19px] pt-[1px]">
    <svg class="w-[24px] h-[21px]" viewBox="0 0 24 21"><path d="M1 20V1h20" fill="none" stroke="#555" stroke-width="1.500"/><rect x="4" y="4" width="19" height="16" fill="#fafafa" stroke="#555" stroke-width="1.500"/><path d="M9 4v16M17 4v16M4 9h19M4 15h19" stroke="#777"/><rect x="9" y="9" width="8" height="6" fill="#fbdc9b" stroke="#e3780c" stroke-width="1.300"/></svg>
    <span class="ml-[12px] text-[#444] whitespace-nowrap">管理规则(<u>R</u>)...</span>
  </div>
</div>

<!-- red annotation boxes -->
<div class="absolute left-0 top-[256px] w-[503px] h-[667px] border-[3px] border-[#ff3b3b] pointer-events-none"></div>
<div class="absolute left-[1072px] top-[556px] w-[421px] h-[108px] border-[3px] border-[#ff3b3b] pointer-events-none"></div>

<!-- watermark -->
<div class="absolute left-[1470px] top-[815px] w-[360px] h-[170px] pointer-events-none">
  <svg class="absolute left-0 top-0 w-[360px] h-[170px]" viewBox="0 0 360 170" fill="rgba(255,255,255,0.35)" stroke="#dcdcdc" stroke-width="1.500">
    <ellipse cx="134" cy="43" rx="13" ry="22" transform="rotate(-15 134 43)"/>
    <ellipse cx="160" cy="20" rx="12" ry="18"/>
    <ellipse cx="190" cy="21" rx="12" ry="18"/>
    <ellipse cx="210" cy="52" rx="12" ry="20" transform="rotate(-15 210 52)"/>
    <path d="M172 46c-16 0-18 14-30 24-10 8-13 18-11 26 3 13 19 17 41 13 22 4 38 0 41-13 2-8-1-18-11-26-12-10-14-24-30-24z"/>
  </svg>
  <div class="absolute left-[6px] top-[39px] text-[80px] leading-[92px] font-bold text-white/40 [-webkit-text-stroke:1.500px_#dcdcdc] [font-family:'Liberation_Sans',sans-serif]">Bai</div>
  <div class="absolute left-[149px] top-[69px] text-[44px] leading-[50px] text-white/40 [-webkit-text-stroke:1.500px_#dcdcdc] [font-family:'Liberation_Sans',sans-serif]">du</div>
  <div class="absolute left-[226px] top-[46px] text-[58px] leading-[72px] font-bold text-white/40 [-webkit-text-stroke:1.500px_#dcdcdc] [font-family:'Noto_Sans_CJK_SC',sans-serif]">经验</div>
  <div class="absolute left-[3px] top-[112px] text-[43.500px] leading-[54px] whitespace-nowrap text-white/40 [-webkit-text-stroke:1.200px_#d6d6d6] [font-family:'Liberation_Sans',sans-serif]">jingyan.baidu.com</div>
</div>

<script>
  const days = ['星期一','星期二','星期三','星期四','星期五','星期六','星期日','星期一','星期二','星期三','星期四','星期五','星期六','星期日','星期一','星期二','星期三','星期四'];
  const box = document.querySelector('#rows');
  let html = '';

  for (let i = 0; i < 20; i++) {
    const sel = i < 18;
    const hdr = sel
      ? 'w-[48px] h-full shrink-0 bg-[#d2d2d2] text-[#1a6b3e] border-r border-r-[#9b9b9b] border-b border-b-[#b0b0b0] text-center text-[23px] font-light leading-[35px] [font-family:Roboto,sans-serif]'
      : 'w-[48px] h-full shrink-0 bg-[#e6e6e6] text-[#111] border-r border-r-[#9b9b9b] border-b border-b-[#b0b0b0] text-center text-[23px] font-light leading-[35px] [font-family:Roboto,sans-serif]';
    let row = '<div class="' + hdr + '">' + (i + 1) + '</div>';

    for (let c = 0; c < 16; c++) {
      const w = c == 15 ? 'w-[41px]' : 'w-[120px]';
      if (sel && c == 0) {
        const bg = i == 0 ? 'bg-white border-[#d4d4d4]' : 'bg-[#c6c6c6] border-[#a9a9a9]';
        row += '<div class="' + w + ' h-full shrink-0 border-r border-b ' + bg + ' pl-[4px] text-[23px] leading-[32px] text-[#111] whitespace-nowrap">' + days[i] + '</div>';
      } else if (sel && c < 3) {
        row += '<div class="' + w + ' h-full shrink-0 border-r border-b bg-[#c6c6c6] border-[#a9a9a9] pr-[5px] text-right text-[23px] font-light leading-[35px] text-black [font-family:Roboto,sans-serif]">1</div>';
      } else {
        row += '<div class="' + w + ' h-full shrink-0 border-r border-b border-[#d4d4d4]"></div>';
      }
    }
    html += '<div class="h-[31px] flex">' + row + '</div>';
  }
  box.innerHTML = html;
</script>
</body>
</html>
